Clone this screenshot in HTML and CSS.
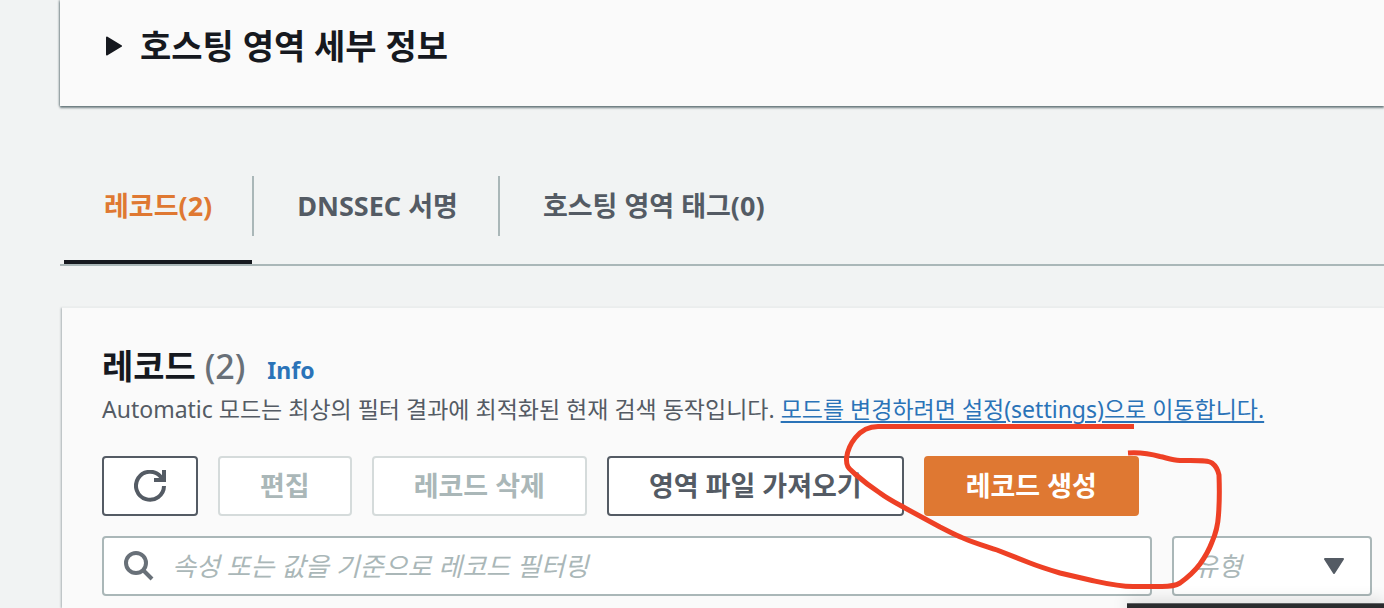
FILE: index.html
```html
<!DOCTYPE html>
<html lang="ko">
<head>
  <meta charset="UTF-8">
  <meta name="viewport" content="width=device-width, initial-scale=1.0">
  <title>호스팅 영역</title>
  <link rel="stylesheet" href="styles.css">
</head>
<body>
  <main class="page">
    <details class="card zone-details">
      <summary>
        <svg class="caret" viewBox="0 0 16 20" aria-hidden="true"><path d="M1 1.5 L15 10 L1 18.5 Z"/></svg>
        <h2>호스팅 영역 세부 정보</h2>
      </summary>
    </details>

    <nav>
      <ul class="tabs">
        <li class="active"><a href="#records">레코드(2)</a></li>
        <li><a href="#dnssec">DNSSEC 서명</a></li>
        <li><a href="#tags">호스팅 영역 태그(0)</a></li>
      </ul>
    </nav>

    <section class="card records" id="records">
      <div class="records-title">
        <h2>레코드 <span class="count">(2)</span></h2>
        <a class="info" href="#info">Info</a>
      </div>
      <p class="description">Automatic 모드는 최상의 필터 결과에 최적화된 현재 검색 동작입니다. <a href="#settings">모드를 변경하려면 설정(settings)으로 이동합니다.</a></p>

      <div class="actions">
        <button class="btn btn-icon" type="button" aria-label="새로 고침">
          <svg viewBox="0 0 32 32" aria-hidden="true"><path d="M30 16 A14 14 0 1 1 26.5 6.500 L29 9.500"/><path d="M30 0 V10 H20"/></svg>
        </button>
        <button class="btn" type="button" disabled>편집</button>
        <button class="btn" type="button" disabled>레코드 삭제</button>
        <button class="btn" type="button">영역 파일 가져오기</button>
        <button class="btn btn-primary" type="button">레코드 생성</button>
      </div>

      <div class="filters">
        <label class="search">
          <svg viewBox="0 0 30 30" aria-hidden="true"><circle cx="12" cy="12" r="10"/><path d="M19 19 L28 28"/></svg>
          <input type="text" placeholder="속성 또는 값을 기준으로 레코드 필터링" aria-label="레코드 필터링">
        </label>
        <div class="type-filter">
          <select aria-label="유형">
            <option>유형</option>
          </select>
          <svg viewBox="0 0 20 16" aria-hidden="true"><path d="M1 1 H19 L10 15 Z"/></svg>
        </div>
      </div>
    </section>
  </main>

  <!-- 레코드 생성 버튼 강조 표시 -->
  <svg class="marker" viewBox="0 0 380 170" aria-hidden="true">
    <path d="M294 6.500 H38 C18 6.500 8 26 6.500 38 C6 48 10 49 15 54 C23 61 31 67 40 73 C48 79 56 83 65 88 L100 107 C108 111 115 115 123 118 C134 123 145 126 157 130 L190 143 C200 147 210 150 220 153 L250 160 C264 163 278 166.500 293 166.500 H322 C330 166.500 335 166 340 163 C347 158 354 152 360 144 C365 137 369 130 372 122 C376 113 378 104 378.500 95 C379.500 82 379.500 68 379 55 C378 50 376 46 372 43 C368 40 360 40.700 340 40.500 C332 40 327 38 320 36.500 C311 34 303 32 288 33"/>
  </svg>

  <div class="bottom-panel"></div>
</body>
</html>
```
FILE: styles.css
```css
* {
  margin: 0;
  padding: 0;
  box-sizing: border-box;
}

body {
  height: 100vh;
  position: relative;
  overflow: hidden;
  font-family: "Noto Sans", "Noto Sans CJK KR", sans-serif;
  background-color: #f1f3f3;
  color: #16191f;
}

.page {
  height: 100%;
  padding-left: 60px;
  display: flex;
  flex-direction: column;
}

.card {
  background-color: #fafafa;
  box-shadow: 0 2px 2px rgba(0, 28, 36, 0.5), -1px 0 2px rgba(0, 28, 36, 0.35);
}

h2 {
  font-size: 34px;
  line-height: 44px;
  font-weight: bold;
}

.zone-details summary {
  display: flex;
  align-items: center;
  gap: 18px;
  padding: 24px 46px 38px;
  list-style: none;
  cursor: pointer;
}

.caret {
  width: 16px;
  height: 20px;
  fill: #16191f;
  stroke: #16191f;
  stroke-width: 2;
  stroke-linejoin: round;
}

/* 탭 */
.tabs {
  display: flex;
  margin-top: 70px;
  padding-left: 4px;
  list-style: none;
  border-bottom: 2px solid #aab7b8;
}

.tabs li {
  display: flex;
}

.tabs li:not(:last-child)::after {
  content: "";
  width: 2px;
  height: 60px;
  background-color: #aab7b8;
}

.tabs a {
  padding: 0 40px 24px 43px;
  border-bottom: 4px solid transparent;
  color: #545b64;
  font-size: 27px;
  line-height: 60px;
  font-weight: bold;
  text-decoration: none;
}

.tabs .active a {
  padding-left: 40px;
  border-bottom-color: #16191f;
  color: #df7832;
}

/* 레코드 */
.records {
  flex: 1;
  margin: 42px 0 0 2px;
  padding: 36px 12px 12px 40px;
  box-shadow: 0 -1px 0 #eaeded, -1px 0 2px rgba(0, 28, 36, 0.3);
}

.records-title {
  display: flex;
  align-items: baseline;
  gap: 22px;
}

.count {
  color: #687078;
  font-weight: 500;
}

.info {
  color: #2a73b8;
  font-size: 23px;
  font-weight: bold;
  text-decoration: none;
}

.description {
  margin-bottom: 26px;
  color: #545b64;
  font-size: 23px;
  line-height: 42px;
}

.description a {
  color: #2a73b8;
  text-underline-offset: 3px;
  text-decoration-thickness: 2px;
}

.actions,
.filters {
  display: flex;
  gap: 20px;
}

.btn {
  height: 60px;
  padding: 0 40px 4px;
  background-color: #fff;
  border: 2px solid #545b64;
  border-radius: 4px;
  color: #545b64;
  font-family: inherit;
  font-size: 27px;
  font-weight: bold;
  cursor: pointer;
}

.btn:disabled {
  border-color: #d5dbdb;
  color: #aab7b8;
  cursor: default;
}

.btn-icon {
  padding: 0 30px;
}

.btn-icon svg {
  display: block;
  width: 32px;
  height: 32px;
  fill: none;
  stroke: #545b64;
  stroke-width: 4;
  overflow: hidden;
}

.btn-primary {
  background-color: #df7832;
  border-color: #df7832;
  color: #fff;
}

.filters {
  margin-top: 20px;
}

.search,
.type-filter {
  height: 60px;
  display: flex;
  align-items: center;
  background-color: #fff;
  border: 2px solid #aab7b8;
  border-radius: 4px;
}

.search {
  flex: 1;
  gap: 18px;
  padding: 0 20px;
}

.search svg {
  width: 30px;
  height: 30px;
  fill: none;
  stroke: #687078;
  stroke-width: 4;
}

.search input,
.type-filter select {
  flex: 1;
  height: 100%;
  border: none;
  outline: none;
  background: transparent;
  color: #aab7b8;
  font-family: inherit;
  font-size: 26px;
  font-style: italic;
}

.search input::placeholder {
  color: #aab7b8;
}

.type-filter {
  width: 200px;
  padding: 0 26px 0 20px;
}

.type-filter select {
  appearance: none;
}

.type-filter svg {
  width: 20px;
  height: 16px;
  fill: #545b64;
  stroke: #545b64;
  stroke-width: 2;
  stroke-linejoin: round;
}

/* 화면 위에 겹쳐지는 요소 */
.marker {
  position: absolute;
  left: 840px;
  top: 420px;
  width: 380px;
  height: 170px;
  overflow: visible;
  fill: none;
  stroke: #ee4025;
  stroke-width: 5;
  pointer-events: none;
}

.bottom-panel {
  position: absolute;
  left: 1127px;
  right: 0;
  bottom: 0;
  height: 5px;
  background-color: #2b2c2e;
  border-top: 1px solid #626466;
  box-shadow: 0 0 16px rgba(0, 0, 0, 0.3);
}
```
